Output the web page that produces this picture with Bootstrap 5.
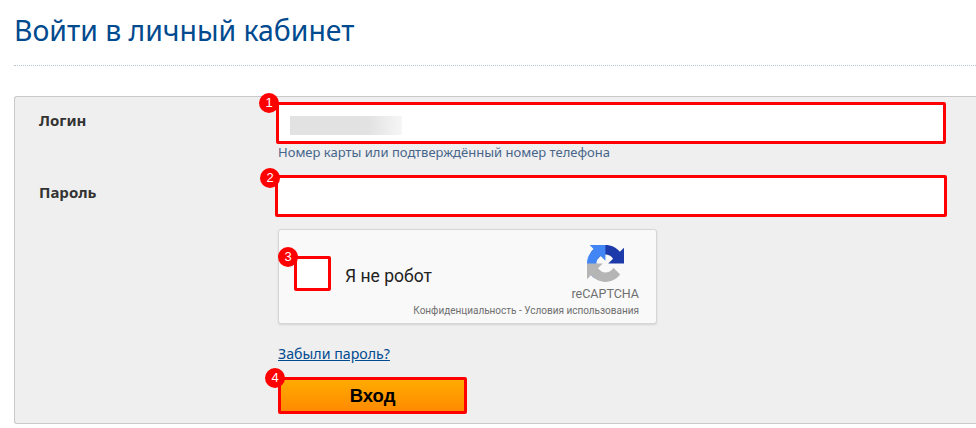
<!DOCTYPE html>
<html lang="ru">
<head>
    <meta charset="UTF-8">
    <title>Войти в личный кабинет</title>
    <link href="https://cdn.jsdelivr.net/npm/bootstrap@5.3.0/dist/css/bootstrap.min.css" rel="stylesheet">
    <style>
        html, body { height: 428px; overflow: hidden; }
        body { background: #fff; font-family: "Noto Sans", "Liberation Sans", sans-serif; color: #333; }
        .page-title { font-size: 28.4px; font-weight: 400; color: #004a8f; margin: 0; padding: 13px 0 0 14px; height: 65px; line-height: 34px; }
        .title-rule { border-top: 1px dotted #b9c4cf; margin: 0 0 30px 14px; }
        .login-panel { margin-left: 14px; height: 328px; background: #efefef; border: 1px solid #c9c9c9; border-right: 0; border-radius: 3px 0 0 3px; padding: 5px 0 0 24px; }
        .label-col { width: 236px; flex: none; font-size: 15px; font-weight: 700; color: #333; padding-top: 7px; }
        .field-col { flex: none; width: 672px; }
        .mark-wrap { position: relative; }
        .red-field.form-control { height: 42px; border: 3px solid #f00; border-radius: 2px; background: #fff; box-shadow: none; padding: 0; }
        .field-one { width: 670px; margin-left: 1px; }
        .field-two { width: 672px; }
        .blur-login { position: absolute; left: 15px; top: 14px; width: 112px; height: 19px; background: linear-gradient(90deg, #e2e2e2 70%, #f6f6f6); }
        .hint-text { font-size: 13px; line-height: 18px; color: #46658a; margin: -1px 0 0 3px; height: 18px; }
        .row-two { margin-top: 14px; }
        .row-two .label-col { padding-top: 6px; }
        .captcha-box { width: 379px; height: 95px; margin: 12px 0 0 3px; background: #f9f9f9; border: 1px solid #d6d6d6; border-radius: 3px; box-shadow: 0 1px 2px rgba(0,0,0,.12); padding: 26px 17px 0 15px; position: relative; }
        .captcha-check { width: 37px; height: 35px; background: #fff; border: 3px solid #f00; border-radius: 2px; flex: none; }
        .captcha-text { font-family: Roboto, sans-serif; font-size: 17.5px; color: #222; margin-left: 14px; line-height: 35px; padding-top: 3px; }
        .captcha-logo { width: 68px; flex: none; }
        .captcha-logo svg { display: block; margin: -12px 0 0 16px; }
        .captcha-brand { font-family: Roboto, sans-serif; font-size: 12.5px; color: #6f6f6f; line-height: 14px; margin-top: 4px; text-align: right; }
        .captcha-terms { font-family: Roboto, sans-serif; font-size: 10px; color: #6f6f6f; position: absolute; right: 17px; bottom: 6px; line-height: 12px; }
        .forgot-link { display: block; font-size: 14.2px; line-height: 18px; color: #004a8f; margin: 21px 0 0 3px; }
        .enter-btn.btn { display: block; width: 189px; height: 37px; margin: 14px 0 0 3px; padding: 0; border: 3px solid #f00; border-radius: 2px; background: linear-gradient(#ffab00, #ff8a00); color: #000; font-family: "Liberation Sans", sans-serif; font-size: 18.5px; font-weight: 700; line-height: 31px; }
        .num-dot { position: absolute; width: 20px; height: 20px; border-radius: 50%; background: #f00; color: #fff; font-family: "Liberation Sans", sans-serif; font-size: 13px; line-height: 20px; text-align: center; }
        .dot-a { left: -16px; top: -9px; }
        .dot-b { left: -15px; top: -7px; }
        .dot-c { left: -1px; top: 17px; }
        .dot-d { left: -10px; top: -9px; }
    </style>
</head>
<body>
    <h1 class="page-title">Войти в личный кабинет</h1>
    <div class="title-rule"></div>

    <div class="login-panel">
        <div class="d-flex">
            <div class="label-col">Логин</div>
            <div class="field-col">
                <div class="mark-wrap">
                    <input type="text" class="form-control red-field field-one">
                    <div class="blur-login"></div>
                    <span class="num-dot dot-a">1</span>
                </div>
                <div class="hint-text">Номер карты или подтверждённый номер телефона</div>
            </div>
        </div>

        <div class="d-flex row-two">
            <div class="label-col">Пароль</div>
            <div class="field-col">
                <div class="mark-wrap">
                    <input type="password" class="form-control red-field field-two">
                    <span class="num-dot dot-b">2</span>
                </div>

                <div class="captcha-box d-flex">
                    <div class="captcha-check"></div>
                    <span class="num-dot dot-c">3</span>
                    <div class="captcha-text flex-grow-1">Я не робот</div>
                    <div class="captcha-logo">
                        <svg width="37" height="39" viewBox="0 0 64 64">
                            <path d="M64 31.955l-.033-1.37V4.687l-7.16 7.16C50.948 4.674 42.033.093 32.05.093c-10.4 0-19.622 4.96-25.458 12.64l11.736 11.86a15.55 15.55 0 0 1 4.754-5.334c2.05-1.6 4.952-2.906 8.968-2.906.485 0 .86.057 1.135.163 4.976.393 9.288 3.14 11.828 7.124l-8.307 8.307 32.292.008" fill="#1c3aa9"/>
                            <path d="M31.862 0l-1.37.033H4.594l7.16 7.16C4.58 13.052 0 21.967 0 31.95c0 10.4 4.96 19.622 12.64 25.458l11.86-11.736a15.55 15.55 0 0 1-5.334-4.754c-1.6-2.05-2.906-4.952-2.906-8.968 0-.485.057-.86.163-1.135.393-4.976 3.14-9.288 7.124-11.828l8.307 8.307L31.862 0" fill="#4285f4"/>
                            <path d="M.001 31.955l.033 1.37v25.9l7.16-7.16c5.86 7.173 14.774 11.754 24.76 11.754 10.4 0 19.622-4.96 25.458-12.64l-11.736-11.86a15.55 15.55 0 0 1-4.754 5.334c-2.05 1.6-4.952 2.906-8.968 2.906-.485 0-.86-.057-1.135-.163-4.976-.393-9.288-3.14-11.828-7.124l8.307-8.307-32.292-.008" fill="#b5b5b5"/>
                        </svg>
                        <div class="captcha-brand">reCAPTCHA</div>
                    </div>
                    <div class="captcha-terms">Конфиденциальность - Условия использования</div>
                </div>

                <a href="#" class="forgot-link">Забыли пароль?</a>
                <div class="mark-wrap">
                    <button type="button" class="btn enter-btn">Вход</button>
                    <span class="num-dot dot-d">4</span>
                </div>
            </div>
        </div>
    </div>
</body>
</html>
